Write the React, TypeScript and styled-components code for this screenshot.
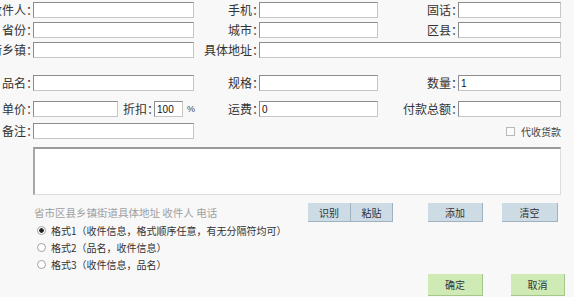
import React from 'react';
import styled, {createGlobalStyle} from 'styled-components';

const GlobalStyle = createGlobalStyle`
    html, body {
        margin: 0;
        padding: 0;
        background: #f8f8f8;
    }
    body {
        font-family: "Noto Sans CJK SC", "Liberation Sans", sans-serif;
        font-size: 12px;
        color: #333;
        overflow: hidden;
    }
`

type Tone = 'blue' | 'green'

const tones = {
    blue: {bg: '#cddbe4', edge: '#9fb2bf'},
    green: {bg: '#d0eab5', edge: '#a6c78a'},
}

export default function App() {
    return (
        <>
            <GlobalStyle/>
            <Page>
                <Row $mt={0}>
                    <Label>收件人：</Label>
                    <Field/>
                    <Label>手机：</Label>
                    <Field/>
                    <Label>固话：</Label>
                    <Field/>
                </Row>
                <Row $mt={4}>
                    <Label>省份：</Label>
                    <Field/>
                    <Label>城市：</Label>
                    <Field/>
                    <Label>区县：</Label>
                    <Field/>
                </Row>
                <Row $mt={4}>
                    <Label>街乡镇：</Label>
                    <Field/>
                    <Label>具体地址：</Label>
                    <Field $span={3}/>
                </Row>

                <Row $mt={17}>
                    <Label>品名：</Label>
                    <Field/>
                    <Label>规格：</Label>
                    <Field/>
                    <Label>数量：</Label>
                    <Field defaultValue={'1'}/>
                </Row>
                <Row $mt={10}>
                    <Label>单价：</Label>
                    <Inline>
                        <Field $w={85}/>
                        <Label $gap={5}>折扣：</Label>
                        <Field $w={29} defaultValue={'100'}/>
                        <Percent>%</Percent>
                    </Inline>
                    <Label>运费：</Label>
                    <Field defaultValue={'0'}/>
                    <Label>付款总额：</Label>
                    <Field/>
                </Row>
                <Row $mt={6}>
                    <Label>备注：</Label>
                    <Field/>
                    <Cod>
                        <Check type="checkbox"/>
                        <CodText>代收货款</CodText>
                    </Cod>
                </Row>

                <Paste/>

                <ActionRow>
                    <Hint>省市区县乡镇街道具体地址 收件人 电话</Hint>
                    <Btn $w={43} $h={19} $tone="blue">识别</Btn>
                    <Btn $w={42} $h={19} $tone="blue">粘贴</Btn>
                    <Btn $w={55} $h={19} $tone="blue" $ml={35}>添加</Btn>
                    <Btn $w={56} $h={19} $tone="blue" $ml={19}>清空</Btn>
                </ActionRow>

                <Formats>
                    <FormatLine>
                        <Radio type="radio" name="fmt" defaultChecked/>
                        格式1（收件信息，格式顺序任意，有无分隔符均可）
                    </FormatLine>
                    <FormatLine>
                        <Radio type="radio" name="fmt"/>
                        格式2（品名，收件信息）
                    </FormatLine>
                    <FormatLine>
                        <Radio type="radio" name="fmt"/>
                        格式3（收件信息，品名）
                    </FormatLine>
                </Formats>

                <Footer>
                    <Btn $w={55} $h={22} $tone="green">确定</Btn>
                    <Btn $w={54} $h={22} $tone="green" $ml={28}>取消</Btn>
                </Footer>
            </Page>
        </>
    );
}

const Page = styled.div`
    width: 574px;
    height: 297px;
    padding-top: 2px;
    box-sizing: border-box;
`

const Row = styled.div<{ $mt: number }>`
    display: grid;
    grid-template-columns: 33px 161px 65px 119px 80px 103px;
    height: 16px;
    margin-top: ${p => p.$mt}px;
    align-items: center;
`

const Label = styled.label<{ $gap?: number }>`
    display: flex;
    justify-content: flex-end;
    white-space: nowrap;
    line-height: 16px;
    font-size: 12px;
    color: #333;
    margin-right: -5px;
    margin-left: ${p => p.$gap ?? 0}px;
`

const Field = styled.input<{ $w?: number; $span?: number }>`
    box-sizing: border-box;
    margin: 0;
    height: 16px;
    width: ${p => (p.$w ? `${p.$w}px` : '100%')};
    grid-column: ${p => (p.$span ? `span ${p.$span}` : 'auto')};
    border: 1px solid;
    border-color: #8c8c8c #c6c6c6 #c6c6c6 #8c8c8c;
    background: #fff;
    padding: 0 2px;
    font: 10px "Liberation Sans", sans-serif;
    color: #111;
    outline: none;
`

const Inline = styled.div`
    display: flex;
    align-items: center;
    height: 16px;
`

const Percent = styled.span`
    margin-left: 4px;
    font: 9px "Liberation Sans", sans-serif;
    color: #444;
`

const Cod = styled.div`
    grid-column: 5 / 7;
    display: flex;
    justify-content: flex-end;
    align-items: center;
`

const Check = styled.input`
    appearance: none;
    margin: 0 6px 0 0;
    width: 9px;
    height: 9px;
    border: 1px solid #b8b8b8;
    background: #fbfbfb;
    box-sizing: border-box;
`

const CodText = styled.span`
    font-size: 10px;
    color: #444;
`

const Paste = styled.textarea`
    display: block;
    box-sizing: border-box;
    margin: 8px 0 0 33px;
    width: 528px;
    height: 48px;
    resize: none;
    border-style: solid;
    border-width: 2px 1px 1px 2px;
    border-color: #9a9a9a #dcdcdc #dcdcdc #a8a8a8;
    background: #fff;
    outline: none;
`

const ActionRow = styled.div`
    display: flex;
    align-items: center;
    box-sizing: border-box;
    width: 558px;
    height: 19px;
    margin-top: 8px;
    padding-left: 34px;
`

const Hint = styled.span`
    flex: 1;
    font-size: 10.5px;
    color: #a0a0a0;
    white-space: nowrap;
`

const Btn = styled.button<{ $w: number; $h: number; $tone: Tone; $ml?: number }>`
    width: ${p => p.$w}px;
    height: ${p => p.$h}px;
    margin: 0 0 0 ${p => p.$ml ?? 0}px;
    padding: 0;
    border: 0;
    border-right: 1px solid ${p => tones[p.$tone].edge};
    border-bottom: 1px solid ${p => tones[p.$tone].edge};
    background: ${p => tones[p.$tone].bg};
    font-family: "Noto Sans CJK SC", sans-serif;
    font-size: 10px;
    color: #333;
`

const Formats = styled.div`
    padding-left: 37px;
`

const FormatLine = styled.label`
    display: flex;
    align-items: center;
    height: 17px;
    font-size: 10px;
    color: #333;
    white-space: nowrap;
`

const Radio = styled.input`
    appearance: none;
    box-sizing: border-box;
    margin: 0 5px 0 0;
    width: 9px;
    height: 9px;
    border-radius: 50%;
    border: 1px solid #a4a4a4;
    background: #fff;

    &:checked {
        background: radial-gradient(circle, #222 0 2px, #fff 2.5px);
    }
`

const Footer = styled.div`
    display: flex;
    justify-content: flex-end;
    padding-right: 9px;
    margin-top: 1px;
`
